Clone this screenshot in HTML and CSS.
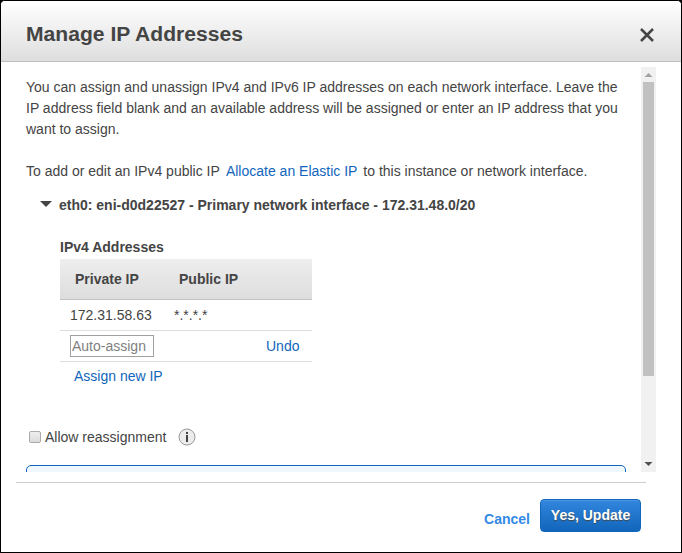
FILE: index.html
```html
<!DOCTYPE html>
<html lang="en">
<head>
<meta charset="utf-8">
<title>Manage IP Addresses</title>
<link rel="stylesheet" href="styles.css">
</head>
<body>
<div class="dialog">
  <header class="header">
    <h1 class="title">Manage IP Addresses</h1>
    <svg class="close" width="14" height="14" viewBox="0 0 14 14"><path d="M1 1L13 13M13 1L1 13" stroke="#444" stroke-width="2.5" fill="none"/></svg>
  </header>
  <main class="body">
    <div class="content">
      <p class="para">You can assign and unassign IPv4 and IPv6 IP addresses on each network interface. Leave the<br>IP address field blank and an available address will be assigned or enter an IP address that you<br>want to assign.</p>
      <p class="para">To add or edit an IPv4 public IP <a class="link eip">Allocate an Elastic IP</a> to this instance or network interface.</p>
      <div class="iface"><span class="caret"></span><span>eth0: eni-d0d22527 - Primary network interface - 172.31.48.0/20</span></div>
      <section class="addresses">
        <h2 class="subtitle">IPv4 Addresses</h2>
        <div class="row head"><span>Private IP</span><span>Public IP</span><span></span></div>
        <div class="row"><span>172.31.58.63</span><span>*.*.*.*</span><span></span></div>
        <div class="row"><span><input class="field" type="text" placeholder="Auto-assign"></span><span></span><a class="link">Undo</a></div>
        <a class="link assign">Assign new IP</a>
      </section>
      <div class="reassign">
        <span class="checkbox"></span><span>Allow reassignment</span>
        <svg class="info" width="18" height="18" viewBox="0 0 18 18"><circle cx="9" cy="9" r="8" fill="#ececec" stroke="#999"/><path d="M8 4h2v2H8zM8 7h2v7H8z" fill="#444"/></svg>
      </div>
      <div class="notice"></div>
    </div>
    <div class="scrollbar">
      <svg class="arrow" width="15" height="15" viewBox="0 0 15 15"><path d="M3.5 10L7.5 6L11.5 10z" fill="#a3a3a3"/></svg>
      <div class="thumb"></div>
      <svg class="arrow" width="15" height="15" viewBox="0 0 15 15"><path d="M3.5 5L7.5 9L11.5 5z" fill="#505050"/></svg>
    </div>
  </main>
  <footer class="footer">
    <a class="cancel">Cancel</a>
    <button class="update">Yes, Update</button>
  </footer>
</div>
</body>
</html>
```
FILE: styles.css
```css
* { box-sizing: border-box; }
body {
  margin: 0;
  background: #000;
  color: #444;
  font: 14px/21px "Liberation Sans", Arial, sans-serif;
  overflow: hidden;
}
h1, h2, p { margin: 0; }
.dialog {
  width: 682px;
  height: 553px;
  border: 1px solid #000;
  border-radius: 5px 5px 0 0;
  background: #fff;
  display: flex;
  flex-direction: column;
  overflow: hidden;
}
.header {
  height: 61px;
  flex: none;
  padding: 5px 27px 0 25px;
  display: flex;
  align-items: center;
  justify-content: space-between;
  background: linear-gradient(#fff, #dedede);
  border-bottom: 1px solid #bfbfbf;
}
.title { font-size: 21.1px; line-height: 28px; }
.close { margin-top: 2px; }
.body {
  height: 405px;
  margin: 5px 25px 0;
  flex: none;
  display: flex;
  justify-content: space-between;
}
.content {
  width: 600px;
  height: 405px;
  padding-top: 10px;
  overflow: hidden;
}
.para { margin-bottom: 21px; white-space: nowrap; }
.link { color: #1166bb; text-decoration: none; }
.eip { margin: 0 2px 0 2.5px; }
.iface {
  display: flex;
  align-items: center;
  margin: -8px 0 0 14px;
  font-weight: bold;
  white-space: nowrap;
}
.caret {
  border: solid transparent;
  border-width: 6px 6px 0;
  border-top-color: #444;
  margin: -4px 7px 0 0;
}
.addresses { width: 252px; margin: 21px 0 0 34px; }
.subtitle { font-size: 14px; line-height: 21px; margin-bottom: 1px; }
.row {
  display: grid;
  grid-template-columns: 104px 92px 1fr;
  align-items: center;
  height: 31px;
  padding-left: 10px;
  border-bottom: 1px solid #ddd;
}
.head {
  height: 41px;
  padding-left: 15px;
  font-weight: bold;
  background: linear-gradient(#eee, #ddd);
  border-bottom-color: #c4c4c4;
}
.field {
  display: block;
  width: 84px;
  height: 22px;
  padding: 1px;
  border: 1px solid #a0a0a0;
  border-radius: 0;
  background: #fff;
  font: 14px "Liberation Sans", Arial, sans-serif;
}
.field::placeholder { color: #808080; }
.assign { display: block; margin: 4px 0 0 14px; }
.reassign { display: flex; align-items: center; margin: 40px 0 0 3px; height: 21px; }
.checkbox {
  width: 12px;
  height: 12px;
  margin: -2px 4px 0 0;
  border: 1px solid #aaa;
  border-radius: 2px;
  background: linear-gradient(#eee, #dcdcdc);
}
.info { margin: -1px 0 0 12px; }
.notice {
  height: 60px;
  margin-top: 17px;
  border: 1px solid #1166bb;
  border-radius: 5px;
  background: #eff7ff;
}
.scrollbar { width: 15px; height: 405px; background: #f1f1f1; }
.arrow { display: block; }
.thumb { width: 11px; height: 294px; margin: 0 2px 81px; background: #c1c1c1; }
.footer {
  flex: 1;
  width: 630px;
  margin: 10px 0 0 15px;
  padding: 16px 5px 0 0;
  border-top: 1px solid #ccc;
  display: flex;
  justify-content: flex-end;
  align-items: flex-start;
}
.cancel { margin: 10px 10px 0 0; font-weight: bold; color: #338ae4; }
.update {
  width: 101px;
  height: 33px;
  padding: 0 0 1px;
  border: 1px solid #1166bb;
  border-radius: 4px;
  background: linear-gradient(#3286dd, #1166bb);
  box-shadow: inset 0 1px 0 #4a96e2;
  color: #fff;
  font: bold 14px "Liberation Sans", Arial, sans-serif;
  text-shadow: 0 1px 1px #444;
}
```
